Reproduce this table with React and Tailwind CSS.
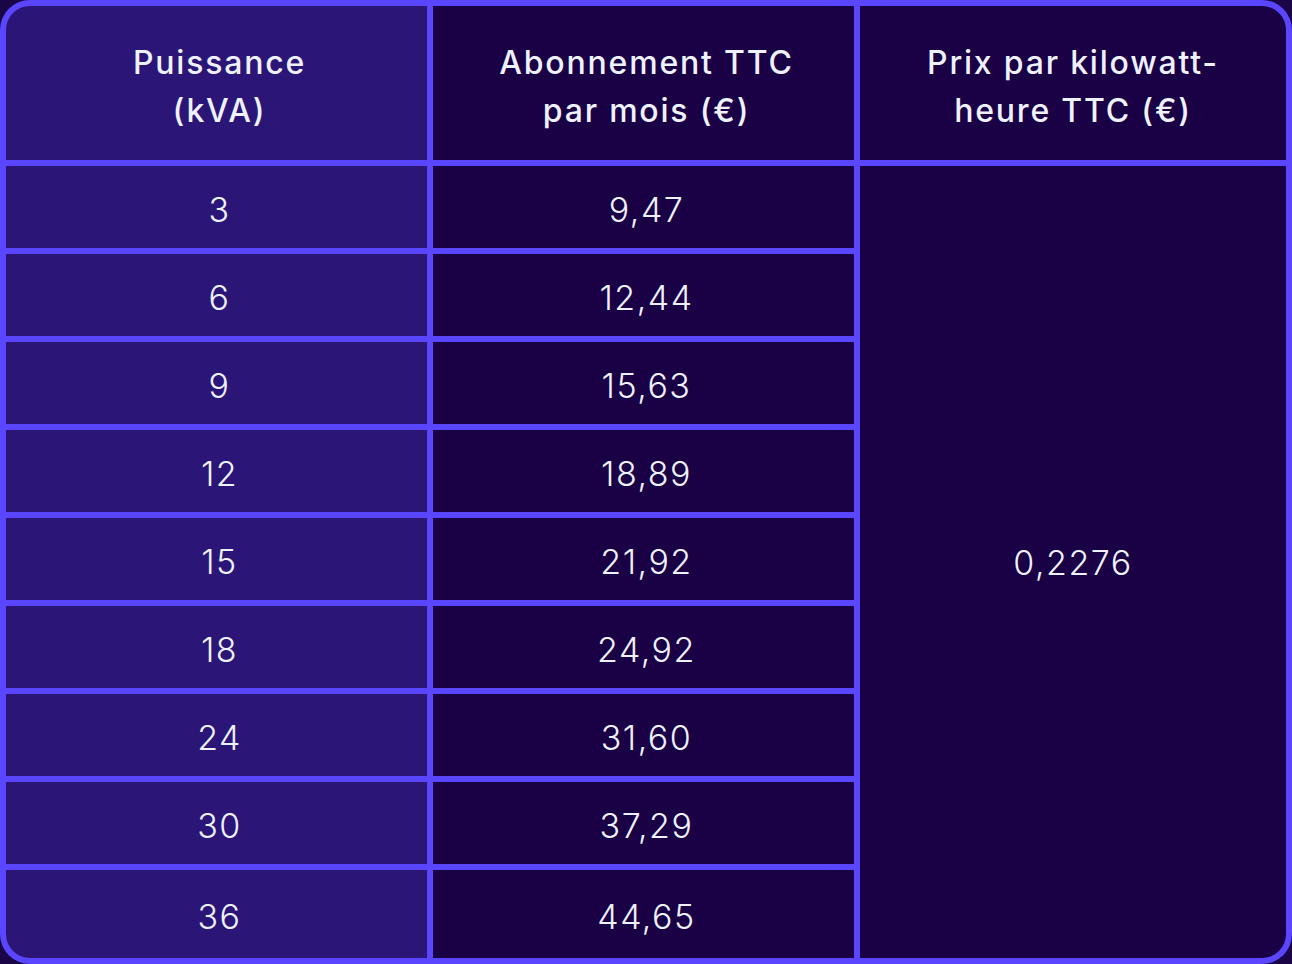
import React from 'react';

const rows = [
  ['3', '9,47'],
  ['6', '12,44'],
  ['9', '15,63'],
  ['12', '18,89'],
  ['15', '21,92'],
  ['18', '24,92'],
  ['24', '31,60'],
  ['30', '37,29'],
  ['36', '44,65'],
];

const App = () => {
  return (
    <div className="w-[1292px] h-[964px] bg-[#1a0646]" style={{fontFamily: 'Inter, "Open Sans", sans-serif'}}>
      <div className="grid grid-cols-[421px_421px_1fr] grid-rows-[154px_repeat(8,82px)_88px] gap-[6px] p-[6px] bg-[#5a46ff] rounded-[30px] h-[964px] text-[#eef2ff]">
        {/* header */}
        <div className="bg-[#2b1577] rounded-tl-[24px] flex items-center justify-center text-center pt-[8px] pl-[6px] text-[32px] leading-[48px] font-medium tracking-[1.8px]">
          Puissance<br />(kVA)
        </div>
        <div className="bg-[#1a0044] flex items-center justify-center text-center pt-[8px] pl-[6px] text-[32px] leading-[48px] font-medium tracking-[1.8px]">
          Abonnement TTC<br />par mois (€)
        </div>
        <div className="bg-[#1a0044] rounded-tr-[24px] flex items-center justify-center text-center pt-[8px] text-[32px] leading-[48px] font-medium tracking-[1.8px]">
          Prix par kilowatt-<br />heure TTC (€)
        </div>

        {rows.map(([kva, price], i) => (
          <React.Fragment key={kva}>
            <div className={`bg-[#2b1577] flex items-center justify-center pt-[4px] pl-[6px] text-[34px] font-light tracking-[1.5px] ${i === rows.length - 1 ? 'rounded-bl-[24px]' : ''}`}>
              {kva}
            </div>
            <div className="bg-[#1a0044] flex items-center justify-center pt-[4px] pl-[6px] text-[34px] font-light tracking-[1.5px]">
              {price}
            </div>
            {i === 0 && (
              <div className="bg-[#1a0044] row-span-9 rounded-br-[24px] flex items-center justify-center text-[34px] font-light tracking-[1.5px]">
                0,2276
              </div>
            )}
          </React.Fragment>
        ))}
      </div>
    </div>
  );
};

export default App;
